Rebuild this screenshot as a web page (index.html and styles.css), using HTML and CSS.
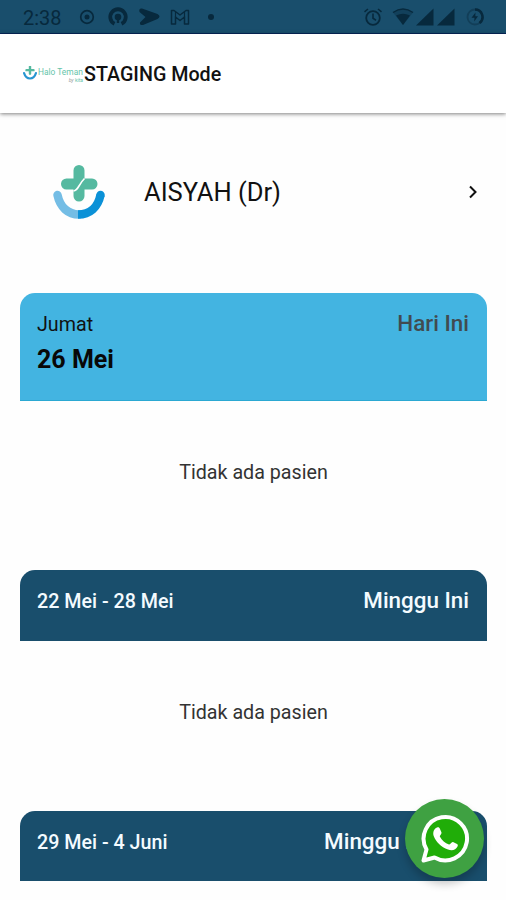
FILE: index.html
```html
<!DOCTYPE html>
<html lang="id">
<head>
    <meta charset="UTF-8">
    <meta name="viewport" content="width=device-width, initial-scale=1">
    <title>Halo Teman</title>
    <link rel="stylesheet" href="styles.css">
</head>
<body>
<div class="status-bar">
    <span class="time">2:38</span>
    <svg class="notif-icons" width="144" height="20" viewBox="0 0 144 20">
        <circle cx="9" cy="10" r="6.3" fill="none" stroke="currentColor" stroke-width="1.7"/>
        <circle cx="9" cy="10" r="2.5"/>
        <path d="M36.500 16.800A7.700 7.700 0 1 1 43.500 16.800" fill="none" stroke="currentColor" stroke-width="3.800"/>
        <circle cx="40" cy="10" r="3.300"/>
        <path d="M38.800 12h2.400v4h-2.400z"/>
        <path d="M64 1.500L79.500 7Q83.500 9.500 79.500 12L65 18Q61.500 18.500 62 15.500L67.500 10L61.500 5Q60.500 1 64 1.500Z"/>
        <path d="M93.500 17V3.500H96L102 8L108 3.500H110.500V17H106.500V10L102 13.500L97.500 10V17Z" fill="none" stroke="currentColor" stroke-width="1.500" stroke-linejoin="round"/>
        <path d="M97.500 10V5M106.500 10V5" stroke="currentColor" stroke-width="1.200"/>
        <circle cx="133" cy="10" r="3"/>
    </svg>
    <svg class="system-icons" width="122" height="20" viewBox="0 0 122 20">
        <circle cx="10" cy="11" r="6.800" fill="none" stroke="currentColor" stroke-width="1.800"/>
        <path d="M1.500 4.800L5 2M18.500 4.800L15 2M10 6.500V11.300L13 13.200" fill="none" stroke="currentColor" stroke-width="1.600"/>
        <path d="M30 5.500Q40 -1.500 50 5.500L40 18Z" opacity=".35"/>
        <path d="M30 5.500Q40 -1.500 50 5.500" fill="none" stroke="currentColor" stroke-width="1.500"/>
        <path d="M33 8.500Q40 5 47 8.500L40 18Z"/>
        <path d="M53 18.500L70.500 1.500V18.500Z"/>
        <path d="M74 18.500L91.500 1.500V18.500Z"/>
        <circle cx="112" cy="10" r="7.500" fill="none" stroke="currentColor" stroke-width="1.800" opacity=".4"/>
        <path d="M112 2.500A7.500 7.500 0 0 1 116.500 16" fill="none" stroke="currentColor" stroke-width="2.500"/>
        <path d="M112.500 5.500L108.500 10.800H111.500L111.200 14.500L115 9.300H112.300Z"/>
    </svg>
</div>

<header class="app-bar">
    <svg class="brand-mark" width="14" height="15" viewBox="0 0 52 55">
        <path d="M26 2V28M13 15H39" stroke="#55b9a0" stroke-width="9" stroke-linecap="round"/>
        <path d="M4 26Q10 46 26 46T48 26" fill="none" stroke="#2795d1" stroke-width="8" stroke-linecap="round"/>
    </svg>
    <div class="brand">
        <span class="brand-name">Halo Teman</span>
        <span class="brand-sub"><i>by</i> kita</span>
    </div>
    <h1>STAGING Mode</h1>
</header>

<main>
    <a class="profile">
        <svg class="avatar" width="54" height="56" viewBox="0 0 54 56">
            <path d="M5.500 31C8 43 16 50.500 27 50.500" fill="none" stroke="#74bde5" stroke-width="8.500" stroke-linecap="round"/>
            <path d="M48.500 31C46 43 38 50.500 26 50.500" fill="none" stroke="#0b91d7" stroke-width="8.500"/>
            <circle cx="48.500" cy="31" r="4.250" fill="#0b91d7"/>
            <path d="M27 6.500V32M14.500 20H40" fill="none" stroke="#55b9a0" stroke-width="11" stroke-linecap="round"/>
            <path d="M21.500 27Q24.500 26.500 27 22T32.500 14.500" fill="none" stroke="#fff" stroke-width="1.600"/>
        </svg>
        <span class="name">AISYAH (Dr)</span>
        <svg class="arrow" width="10" height="14" viewBox="0 0 10 14">
            <path d="M2 1.500L7.500 7L2 12.500" fill="none" stroke="#111" stroke-width="2"/>
        </svg>
    </a>

    <section class="schedule">
        <div class="card today">
            <div>
                <p class="day">Jumat</p>
                <p class="date">26 Mei</p>
            </div>
            <span class="label">Hari Ini</span>
        </div>
        <p class="empty">Tidak ada pasien</p>
    </section>

    <section class="schedule">
        <div class="card week">
            <span class="range">22 Mei - 28 Mei</span>
            <span class="label">Minggu Ini</span>
        </div>
        <p class="empty">Tidak ada pasien</p>
    </section>

    <section class="schedule">
        <div class="card week last">
            <span class="range">29 Mei - 4 Juni</span>
            <span class="label">Minggu Depan</span>
        </div>
    </section>
</main>

<a class="whatsapp">
    <svg width="50" height="50" viewBox="0 0 50 50">
        <path d="M3.500 46.500L6.500 35.500A21.700 21.700 0 1 1 14.500 43.500Z" fill="#20ad08" stroke="#fff" stroke-width="4" stroke-linejoin="round"/>
        <path d="M17 13.500C18.500 13 19.500 13.500 20 15L21.500 18.500C22 20 19.500 21.500 19.800 22.500C22 26.500 25 29 29 30.500C30.500 30.500 31.500 27.500 33 28L37 30C38 30.500 38 31.500 37.500 32.500C36 36 32 37 28 35.500C21 33 16 28 13.700 22C12.500 18.500 14 14.500 17 13.500Z" fill="#fff"/>
    </svg>
</a>
</body>
</html>
```
FILE: styles.css
```css
*{
    padding: 0;
    margin: 0;
    box-sizing: border-box;
}
body{
    height: 900px;
    overflow: hidden;
    background: #fefefe;
    color: #111;
    font-family: Roboto, "Liberation Sans", sans-serif;
}
svg{
    display: block;
    flex: none;
}

/* status bar */
.status-bar{
    display: flex;
    align-items: center;
    height: 34px;
    padding: 0 21px 0 23px;
    background: #194e6c;
    border-bottom: 1px solid #06275b;
    color: #07293d;
}
.status-bar svg{
    fill: currentColor;
}
.time{
    width: 55px;
    font-size: 20px;
    line-height: 34px;
    padding-top: 2px;
}
.system-icons{
    margin-left: auto;
}

/* app bar */
.app-bar{
    display: flex;
    align-items: center;
    height: 79px;
    padding-left: 23px;
    background: #fff;
    box-shadow: 0 1px 4px rgba(0, 0, 0, .5);
}
.brand{
    display: flex;
    flex-direction: column;
    width: 47px;
    padding: 3px 1px 0 1px;
    color: #65c4aa;
    white-space: nowrap;
}
.brand-name{
    font-size: 8.4px;
    line-height: 9px;
}
.brand-sub{
    font-size: 5px;
    line-height: 6px;
    text-align: right;
}
.brand-sub i{
    color: #9a9a9a;
}
h1{
    padding-top: 2px;
    font-size: 19.7px;
    font-weight: 500;
}

/* doctor */
.profile{
    display: flex;
    align-items: center;
    height: 158px;
    padding: 0 28px 0 52px;
}
.name{
    margin-left: 38px;
    font-size: 25.5px;
}
.arrow{
    margin-left: auto;
}

/* schedule */
main{
    height: 787px;
    overflow: hidden;
}
.schedule{
    margin: 0 19px 0 20px;
}
.profile + .schedule{
    margin-top: 22px;
}
.card{
    display: flex;
    justify-content: space-between;
    padding: 0 18px 0 17px;
    border-radius: 15px 15px 0 0;
}
.today{
    height: 108px;
    padding-top: 17px;
    background: #43b4e1;
    border-bottom: 1px solid #2ba8d2;
}
.day{
    font-size: 19.7px;
    line-height: 30px;
}
.date{
    font-size: 25px;
    font-weight: 700;
    line-height: 39px;
    color: #080808;
}
.label{
    font-size: 22.4px;
    font-weight: 500;
    line-height: 26px;
}
.today .label{
    color: #414b50;
}
.week{
    height: 71px;
    padding-top: 17px;
    background: #194e6c;
    color: #f4fbff;
    font-weight: 500;
}
.last{
    height: 70px;
}
.range{
    font-size: 19.7px;
    line-height: 30px;
}
.empty{
    height: 169px;
    padding-top: 57px;
    font-size: 19.7px;
    line-height: 30px;
    color: #333;
    text-align: center;
}
.week + .empty{
    height: 170px;
}

/* floating chat button */
.whatsapp{
    position: fixed;
    right: 22px;
    bottom: 22px;
    display: flex;
    align-items: center;
    justify-content: center;
    width: 79px;
    height: 79px;
    border-radius: 50%;
    background: #3fa142;
    box-shadow: 0 6px 9px rgba(0, 0, 0, .22);
}
```
